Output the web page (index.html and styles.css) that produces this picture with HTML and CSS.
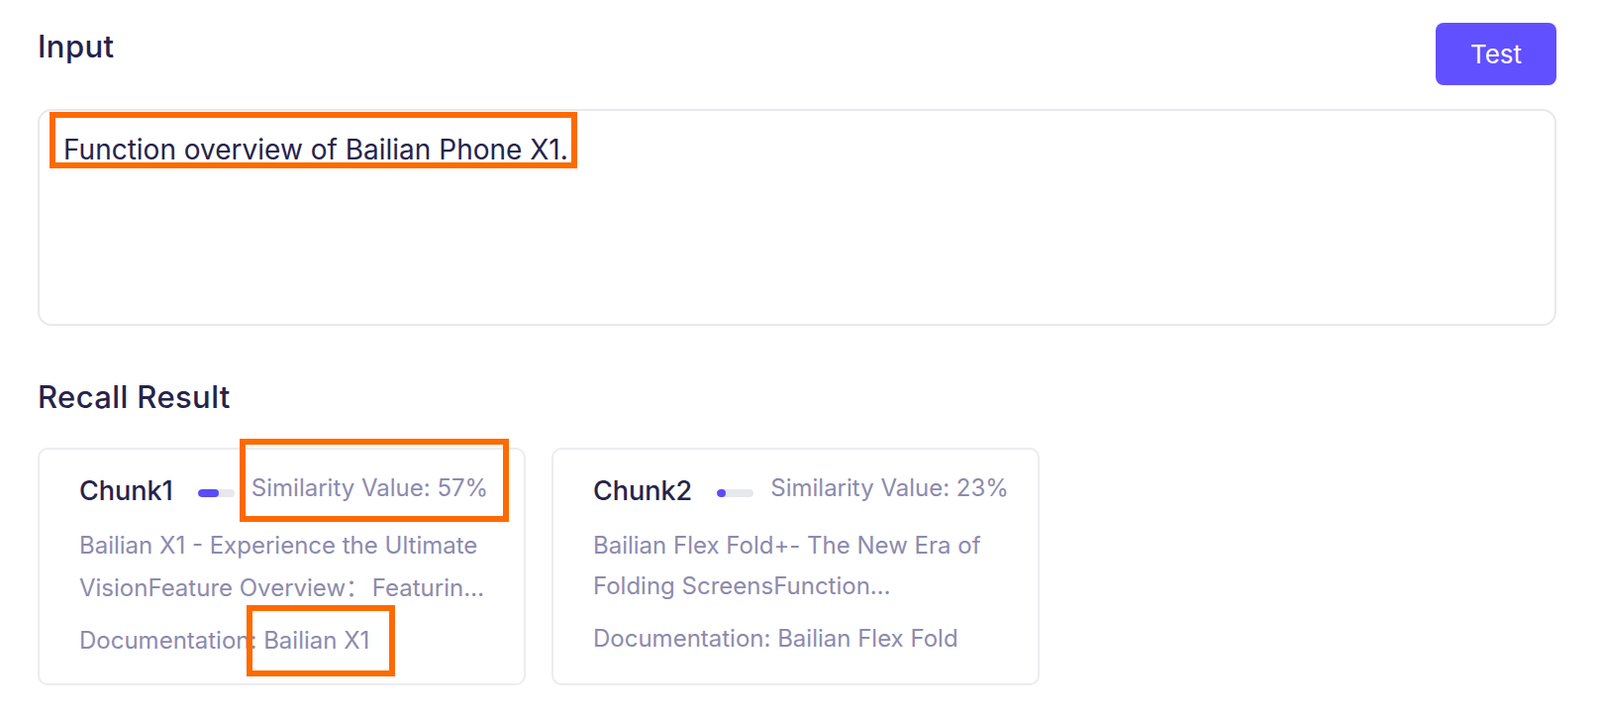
FILE: index.html
```html
<!DOCTYPE html>
<html lang="en">
<head>
    <meta charset="UTF-8">
    <meta name="viewport" content="width=device-width, initial-scale=1.0">
    <title>Recall Test</title>
    <link rel="stylesheet" href="styles.css">
</head>
<body>
    <div class="page">
        <div class="header">
            <h2 class="section-title">Input</h2>
            <button class="test-btn">Test</button>
        </div>

        <div class="input-box">
            <span class="query">Function overview of Bailian Phone X1.<i class="mark mark-query"></i></span>
        </div>

        <h2 class="section-title recall-title">Recall Result</h2>

        <div class="results">
            <div class="card">
                <div class="card-head">
                    <span class="chunk-name">Chunk1</span>
                    <span class="bar"><span class="bar-fill" style="width: 57%"></span></span>
                    <span class="score">Similarity Value: 57%<i class="mark mark-score"></i></span>
                </div>
                <p class="desc">Bailian X1 - Experience the Ultimate VisionFeature Overview<span class="cjk">：</span> Featurin…</p>
                <p class="doc">Documentation: <span class="doc-name">Bailian X1<i class="mark mark-doc"></i></span></p>
            </div>

            <div class="card">
                <div class="card-head">
                    <span class="chunk-name">Chunk2</span>
                    <span class="bar"><span class="bar-fill" style="width: 23%"></span></span>
                    <span class="score">Similarity Value: 23%</span>
                </div>
                <p class="desc">Bailian Flex Fold+- The New Era of Folding ScreensFunction…</p>
                <p class="doc">Documentation: <span class="doc-name">Bailian Flex Fold</span></p>
            </div>
        </div>
    </div>
</body>
</html>
```

FILE: styles.css
```css
body {
    margin: 0;
    background-color: #ffffff;
    font-family: 'Inter', 'Noto Sans', sans-serif;
    color: #25234b;
}

.page {
    padding: 23px 44px 0 38px;
}

.header {
    display: flex;
    justify-content: space-between;
    align-items: flex-start;
}

.section-title {
    margin: 3px 0 0 0;
    font-size: 31px;
    line-height: 42px;
    font-weight: 500;
    letter-spacing: 0.4px;
    color: #25234b;
}

.test-btn {
    width: 122px;
    height: 63px;
    border: none;
    border-radius: 8px;
    background-color: #6150ff;
    color: #ffffff;
    font-family: 'Inter', sans-serif;
    font-size: 26px;
    cursor: pointer;
}

/* text area */
.input-box {
    margin-top: 24px;
    height: 219px;
    box-sizing: border-box;
    border: 2px solid #e9e9ed;
    border-radius: 14px;
    padding: 19px 24px;
    font-size: 28px;
    line-height: 40px;
    color: #25234b;
}

.query {
    display: inline-block;
    position: relative;
}

.recall-title {
    margin-top: 51px;
}

.results {
    display: flex;
    gap: 26px;
    margin-top: 30px;
}

.card {
    width: 493px;
    box-sizing: border-box;
    border: 2px solid #ececf0;
    border-radius: 10px;
    padding: 24px 34px 27px 40px;
}

.card-head {
    display: flex;
    align-items: center;
    height: 36px;
    white-space: nowrap;
}

.chunk-name {
    font-size: 27px;
    line-height: 36px;
    font-weight: 500;
    color: #25234b;
}

.bar {
    flex: none;
    width: 37px;
    height: 8px;
    margin: 4px 0 0 25px;
    border-radius: 4px;
    background-color: #e7e7ee;
    overflow: hidden;
}

.bar-fill {
    display: block;
    height: 100%;
    border-radius: 4px;
    background-color: #5a4cf6;
}

.score {
    position: relative;
    margin: 0 0 7px 17px;
    font-size: 24px;
    line-height: 32px;
    color: #8c8aae;
}

.desc {
    margin: 16px 0 0 0;
    font-size: 24px;
    line-height: 41px;
    color: #8c8aae;
}

.cjk {
    font-family: 'Noto Sans CJK SC', sans-serif;
    margin-right: -4px;
}

.doc {
    margin: 17px 0 0 0;
    font-size: 24px;
    line-height: 32px;
    color: #8c8aae;
}

.doc-name {
    position: relative;
}

/* orange annotation frames */
.mark {
    position: absolute;
    box-sizing: border-box;
    border: 6px solid #ff6a00;
    pointer-events: none;
}

.mark-query {
    left: -14px;
    right: -9px;
    top: -18px;
    bottom: 1px;
}

.mark-score {
    left: -12px;
    right: -21px;
    top: -34px;
    bottom: -18px;
}

.mark-doc {
    left: -17px;
    right: -26px;
    top: -21px;
    bottom: -22px;
}
```
